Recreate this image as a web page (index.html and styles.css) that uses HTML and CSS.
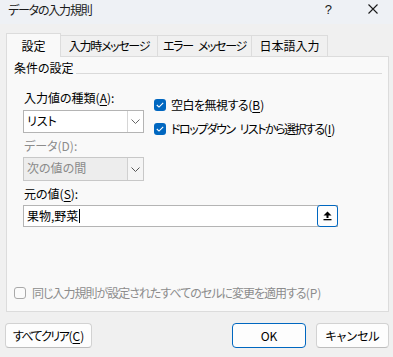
FILE: index.html
```html
<!DOCTYPE html>
<html lang="ja">
<head>
<meta charset="utf-8">
<link rel="stylesheet" href="styles.css">
</head>
<body>
<div class="titlebar">
  <span class="title">データの入力規則</span>
  <span class="help">?</span>
  <svg class="close" width="10" height="10" viewBox="0 0 10 10"><path d="M0.5 0.5L9.5 9.5M9.5 0.5L0.5 9.5" stroke="#1a1a1a" stroke-width="1.1" fill="none"/></svg>
</div>
<div class="main">
  <div class="tabs">
    <div class="tab active">設定</div>
    <div class="tab t2"><span class="k13">入力時メッセージ</span></div>
    <div class="tab t3"><span class="k13">エラー</span><span class="sp"></span><span class="k13">メッセージ</span></div>
    <div class="tab t4">日本語入力</div>
  </div>
  <div class="panel">
    <div class="legend"><span>条件の設定</span></div>
    <div class="form">
      <div class="cols">
        <div class="leftcol">
          <div class="lbl l1">入力値の種類(<u>A</u>):</div>
          <div class="select s1"><span class="val">リスト</span><span class="drop"><svg width="9" height="5" viewBox="0 0 9 5"><path d="M0.5 0.5L4.5 4.5L8.5 0.5" stroke="#666" fill="none"/></svg></span></div>
          <div class="lbl l2 dis">データ(D):</div>
          <div class="select s2"><span class="val">次の値の間</span><span class="drop"><svg width="9" height="5" viewBox="0 0 9 5"><path d="M0.5 0.5L4.5 4.5L8.5 0.5" stroke="#555" fill="none"/></svg></span></div>
        </div>
        <div class="rightcol">
          <div class="chk r1"><span class="box on"><svg width="8" height="6" viewBox="0 0 8 6"><path d="M0.8 3L3 5.1L7.2 0.9" stroke="#fff" stroke-width="1.1" fill="none"/></svg></span><span><span class="k05">空白を無視する</span>(<u>B</u>)</span></div>
          <div class="chk r2"><span class="box on"><svg width="8" height="6" viewBox="0 0 8 6"><path d="M0.8 3L3 5.1L7.2 0.9" stroke="#fff" stroke-width="1.1" fill="none"/></svg></span><span><span class="k15">ドロップダウン</span><span class="sp"></span><span class="k15">リストから選択する</span>(<u>I</u>)</span></div>
        </div>
      </div>
      <div class="lbl l3">元の値(<u>S</u>):</div>
      <div class="input"><span class="val">果物,野菜<span class="caret"></span></span><span class="upbtn"><svg width="9" height="10" viewBox="0 0 9 10"><path d="M4.5 0.5L8.5 4.5H5.5V7H3.5V4.5H0.5Z" fill="#000"/><rect x="0.5" y="8" width="8" height="1.3" fill="#000"/></svg></span></div>
    </div>
    <div class="chk bottom dis"><span class="box off"></span><span><span class="k10">同じ入力規則が設定されたすべてのセルに変更を適用する</span>(P)</span></div>
  </div>
</div>
<div class="buttons">
  <button class="btn clear"><span class="k15">すべてクリア</span>(<u>C</u>)</button>
  <button class="btn ok">OK</button>
  <button class="btn cancel">キャンセル</button>
</div>
</body>
</html>
```
FILE: styles.css
```css
html, body {
  margin: 0;
  padding: 0;
}
body {
  width: 393px;
  height: 357px;
  overflow: hidden;
  background: #f0f0f0;
  font-family: "Noto Sans CJK JP", "Noto Sans", sans-serif;
  font-size: 12px;
  color: #000;
  font-feature-settings: "palt";
}
u { text-decoration-thickness: 1px; text-underline-offset: 2px; }

.k05 { letter-spacing: -0.5px; }
.k10 { letter-spacing: -1px; }
.k13 { letter-spacing: -1.3px; }
.k15 { letter-spacing: -1.5px; }
.sp { display: inline-block; width: 5px; }

.titlebar {
  height: 24px;
  background: #eef1f5;
  display: flex;
  align-items: center;
  padding-left: 8px;
  box-sizing: border-box;
}
.title { font-size: 12px; line-height: 16px; color: #1a1a1a; margin-top: -4px; letter-spacing: -1.2px; }
.help { margin-left: auto; font-size: 13px; line-height: 16px; margin-top: -4px; margin-right: 36px; color: #1a1a1a; font-family: "Liberation Sans", sans-serif; }
.close { margin-right: 15px; margin-top: -6px; }

.main { padding: 9px 4px 0 6px; }
.tabs {
  display: flex;
  align-items: flex-start;
  height: 24px;
  margin-bottom: -1px;
  position: relative;
  z-index: 1;
}
.tab {
  box-sizing: border-box;
  border: 1px solid #dcdcdc;
  border-bottom: none;
  background: #f0f0f0;
  text-align: center;
  line-height: 20px;
  height: 21px;
  margin-top: 2px;
  margin-left: -1px;
  white-space: nowrap;
}
.tab.active {
  height: 24px;
  margin-top: 0;
  margin-left: 0;
  background: #f9f9f9;
  width: 55px;
  line-height: 22px;
  padding-top: 1px;
}
.t2 { width: 98px; }
.t3 { width: 95px; }
.t4 { width: 77px; }

.panel {
  box-sizing: border-box;
  height: 256px;
  width: 383px;
  border: 1px solid #dcdcdc;
  background: #f9f9f9;
  padding: 0 6px 10px 7px;
  display: flex;
  flex-direction: column;
}
.legend {
  display: flex;
  align-items: flex-start;
  margin-top: 3px;
  line-height: 16px;
}
.legend::after {
  content: "";
  flex: 1;
  border-top: 1px solid #dadada;
  margin: 13px 0 0 2px;
}
.form { margin-left: 9px; }
.cols { display: flex; }
.leftcol { width: 121px; }
.lbl { line-height: 16px; height: 16px; padding-left: 1px; }
.l1 { margin-top: 14px; }
.l2 { margin-top: 5px; }
.l3 { margin-top: 5px; }
.dis { color: #8c8c8c; }

.select {
  box-sizing: border-box;
  display: flex;
  border: 1px solid #b4b4b4;
  background: #fff;
}
.s1 { margin-top: 4px; height: 23px; }
.s2 { margin-top: 3px; height: 24px; background: #ededed; border-color: #c8c8c8; color: #8a8a8a; }
.select .val { flex: 1; padding-left: 3px; line-height: 20px; }
.drop {
  width: 15px;
  border-left: 1px solid #d6d6d6;
  display: flex;
  align-items: center;
  justify-content: center;
  background: #fff;
}
.s2 .drop { background: #f5f5f5; border-left-color: #d0d0d0; }

.rightcol { margin-left: 10px; }
.chk { display: flex; align-items: center; height: 16px; line-height: 16px; white-space: nowrap; }
.r1 { margin-top: 21px; }
.r2 { margin-top: 8px; }
.box {
  box-sizing: border-box;
  width: 12px;
  height: 12px;
  border-radius: 3px;
  margin-right: 5px;
  display: flex;
  align-items: center;
  justify-content: center;
}
.box.on { background: #0067c0; }
.box.off { border: 1px solid #a9a9a9; background: #fbfbfb; margin-right: 6px; }

.input {
  box-sizing: border-box;
  margin-top: 3px;
  width: 315px;
  height: 22px;
  border: 1px solid #b4b4b4;
  background: #fff;
  display: flex;
}
.input .val { flex: 1; padding-left: 3px; line-height: 20px; display: flex; align-items: center; }
.caret { display: inline-block; width: 1px; height: 14px; background: #000; margin-left: 1px; }
.upbtn {
  box-sizing: border-box;
  width: 21px;
  height: 22px;
  margin: -1px -1px 0 0;
  border: 1px solid #0067c0;
  border-radius: 3px;
  background: #fdfdfd;
  display: flex;
  align-items: center;
  justify-content: center;
}

.bottom { margin-top: auto; }

.buttons {
  display: flex;
  padding: 11px 4px 0 5px;
}
.btn {
  box-sizing: border-box;
  height: 25px;
  font: inherit;
  font-size: 12px;
  color: #000;
  background: #fdfdfd;
  border: 1px solid #d2d2d2;
  border-bottom-color: #bdbdbd;
  border-radius: 4px;
  padding: 0;
  font-feature-settings: "palt";
}
.clear { width: 87px; }
.ok { width: 74px; margin-left: auto; border: 1px solid #0067c0; }
.cancel { width: 73px; margin-left: 10px; }
```
